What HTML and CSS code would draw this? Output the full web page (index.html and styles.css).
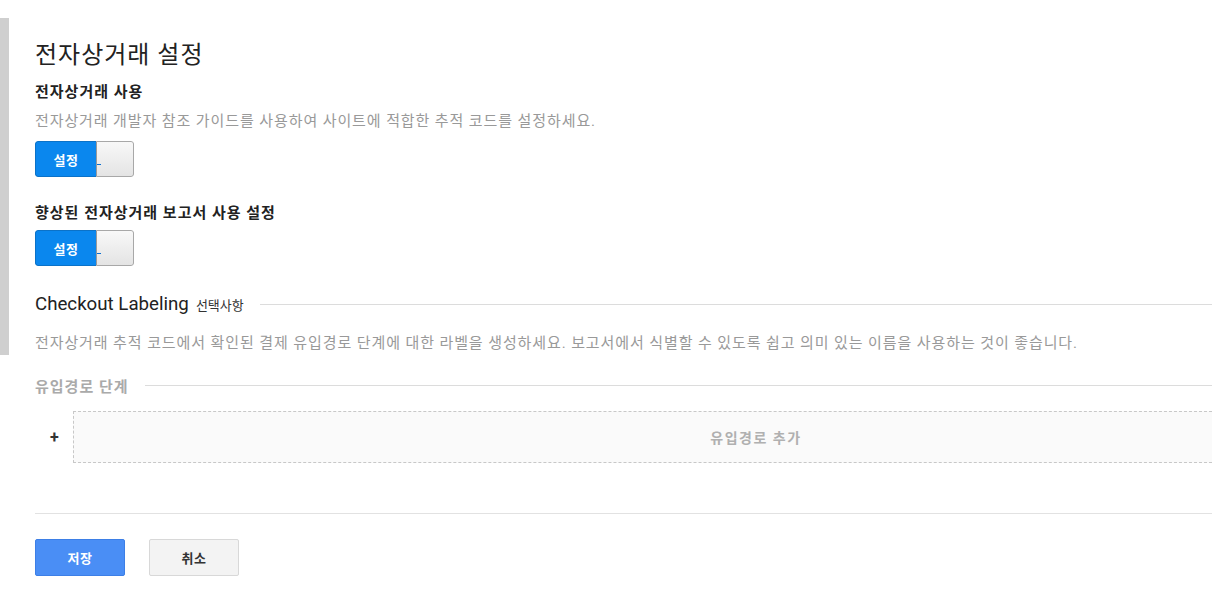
FILE: index.html
```html
<!DOCTYPE html>
<html lang="ko">
<head>
<meta charset="utf-8">
<link rel="stylesheet" href="styles.css">
</head>
<body>
<div class="page">
  <div class="sidebar"></div>
  <main class="content">
    <h1 class="title">전자상거래 설정</h1>
    <h2 class="label">전자상거래 사용</h2>
    <p class="desc">전자상거래 개발자 참조 가이드를 사용하여 사이트에 적합한 추적 코드를 설정하세요.</p>
    <div class="toggle"><span class="on">설정</span><span class="off"></span></div>
    <h2 class="label label2">향상된 전자상거래 보고서 사용 설정</h2>
    <div class="toggle"><span class="on">설정</span><span class="off"></span></div>
    <div class="section-head">
      <span class="section-title">Checkout Labeling</span>
      <span class="optional">선택사항</span>
      <span class="rule"></span>
    </div>
    <p class="desc desc2">전자상거래 추적 코드에서 확인된 결제 유입경로 단계에 대한 라벨을 생성하세요. 보고서에서 식별할 수 있도록 쉽고 의미 있는 이름을 사용하는 것이 좋습니다.</p>
    <div class="steps-head">
      <span class="steps-title">유입경로 단계</span>
      <span class="rule"></span>
    </div>
    <div class="add-row">
      <span class="plus">+</span>
      <div class="add-box">유입경로 추가</div>
    </div>
    <div class="actions">
      <button class="btn btn-primary">저장</button>
      <button class="btn btn-secondary">취소</button>
    </div>
  </main>
</div>
</body>
</html>
```

FILE: styles.css
```css
html, body {
  margin: 0;
  padding: 0;
  background: #fff;
}
body {
  font-family: Roboto, "Noto Sans CJK KR", sans-serif;
  color: #222;
  overflow: hidden;
}
.page {
  display: flex;
  width: 1212px;
  height: 609px;
}
.sidebar {
  width: 9px;
  height: 337px;
  margin-top: 18px;
  background: #cfcfcf;
  flex: none;
}
.content {
  flex: 1;
  padding-left: 26px;
  padding-top: 38px;
  min-width: 0;
}
.title {
  margin: 0;
  font-size: 24px;
  font-weight: 400;
  line-height: 34px;
  letter-spacing: 1px;
  color: #222;
}
.label {
  margin: 9px 0 0;
  font-size: 15px;
  font-weight: 700;
  line-height: 22px;
  letter-spacing: 1px;
  color: #222;
}
.label2 {
  margin-top: 25px;
}
.desc {
  margin: 8px 0 0;
  font-size: 15px;
  line-height: 20px;
  letter-spacing: 0.9px;
  color: #999;
}
.toggle {
  display: flex;
  width: 99px;
  height: 36px;
  margin-top: 10px;
  border-radius: 3px;
  overflow: hidden;
  box-sizing: border-box;
}
.label2 + .toggle {
  margin-top: 6px;
}
.toggle .on {
  width: 61px;
  background: #0a87ee;
  border: 1px solid #0b72c8;
  border-right: none;
  border-radius: 3px 0 0 3px;
  color: #fff;
  font-size: 13px;
  font-weight: 700;
  letter-spacing: 0.5px;
  display: flex;
  align-items: center;
  justify-content: center;
  box-sizing: border-box;
}
.toggle .off {
  flex: 1;
  position: relative;
  background: linear-gradient(#f8f8f8, #e4e4e4);
  border: 1px solid #a8a8a8;
  border-left: 1px solid #999;
  border-radius: 0 3px 3px 0;
  box-sizing: border-box;
}
.toggle .off::after {
  content: "";
  position: absolute;
  left: 0;
  top: 22px;
  width: 4px;
  height: 1px;
  background: #0a6fd0;
}
.section-head {
  display: flex;
  align-items: center;
  margin-top: 26px;
  height: 24px;
}
.section-title {
  font-size: 18.7px;
  color: #222;
}
.optional {
  font-size: 13px;
  margin-left: 7px;
  color: #333;
}
.rule {
  flex: 1;
  height: 1px;
  background: #dcdcdc;
  margin-left: 16px;
}
.desc2 {
  margin-top: 17px;
}
.steps-head {
  display: flex;
  align-items: center;
  margin-top: 21px;
  height: 22px;
}
.steps-title {
  font-size: 15px;
  font-weight: 700;
  letter-spacing: 1px;
  color: #aaa;
}
.steps-head .rule {
  margin-left: 16px;
}
.add-row {
  display: flex;
  align-items: center;
  margin-top: 15px;
}
.plus {
  width: 38px;
  padding-left: 15px;
  box-sizing: border-box;
  font-size: 16px;
  font-weight: 700;
  color: #333;
}
.add-box {
  flex: 1;
  height: 52px;
  box-sizing: border-box;
  border: 1px dashed #c8c8c8;
  border-right: none;
  background: #fafafa;
  display: flex;
  align-items: center;
  justify-content: center;
  padding-left: 226px;
  font-size: 14px;
  font-weight: 700;
  letter-spacing: 1.5px;
  color: #b0b0b0;
}
.actions {
  display: flex;
  gap: 24px;
  margin-top: 50px;
  padding-top: 25px;
  border-top: 1px solid #e2e2e2;
}
.btn {
  width: 90px;
  height: 37px;
  border-radius: 2px;
  font-family: Roboto, "Noto Sans CJK KR", sans-serif;
  font-size: 13px;
  font-weight: 700;
  letter-spacing: 0.5px;
  cursor: pointer;
}
.btn-primary {
  background: #4a8ef5;
  border: 1px solid #3d7fe6;
  color: #fff;
}
.btn-secondary {
  background: #f3f3f3;
  border: 1px solid #d8d8d8;
  color: #333;
}
```
